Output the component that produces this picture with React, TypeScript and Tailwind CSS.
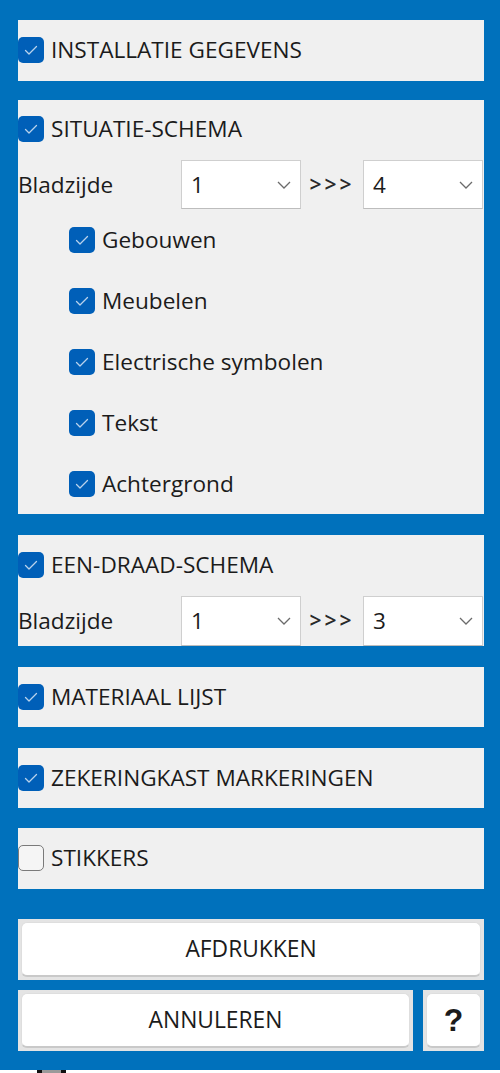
import React from "react";

const font = { fontFamily: '"Open Sans", "Noto Sans", "Liberation Sans", sans-serif' };

const Check = ({ checked = true }: { checked?: boolean }) =>
  checked ? (
    <div className="w-[26px] h-[26px] shrink-0 rounded-[5px] bg-[#005fb8] flex items-center justify-center">
      <svg width="26" height="26" viewBox="0 0 26 26">
        <polyline points="7.5,13.5 11,17 18.5,9.5" fill="none" stroke="#b9d2ec" strokeWidth="1.3" strokeLinecap="round" strokeLinejoin="round" />
      </svg>
    </div>
  ) : (
    <div className="w-[26px] h-[26px] shrink-0 rounded-[5px] border-[1.5px] border-[#7a7a7a] bg-[#f5f5f5]" />
  );

const Chevron = () => (
  <svg width="16" height="10" viewBox="0 0 16 10">
    <polyline points="2,2 8,8 14,2" fill="none" stroke="#6b6b6b" strokeWidth="1.3" />
  </svg>
);

const Select = ({ value }: { value: string }) => (
  <div className="w-[120px] h-full bg-white border border-[#cfcfcf] border-b-[#bdbdbd] flex items-center justify-between pl-[9px] pr-[8px]">
    <span className="text-[22.5px] text-[#1b1b1b]">{value}</span>
    <Chevron />
  </div>
);

const PageRow = ({ to, h }: { to: string; h: string }) => (
  <div className={`flex items-stretch ${h}`}>
    <div className="w-[163px] flex items-center text-[22.6px] text-[#1b1b1b]">Bladzijde</div>
    <Select value="1" />
    <div className="w-[62px] flex items-center justify-center text-[21px] font-semibold tracking-[3px] text-[#2a2a2a]">&gt;&gt;&gt;</div>
    <Select value={to} />
  </div>
);

const Header = ({ label, checked = true }: { label: string; checked?: boolean }) => (
  <div className="h-[60px] flex items-center gap-[7px]">
    <Check checked={checked} />
    <span className="text-[22.6px] text-[#1b1b1b]">{label}</span>
  </div>
);

const SubItem = ({ label }: { label: string }) => (
  <div className="h-[61px] shrink-0 flex items-center gap-[7px] pl-[51px]">
    <Check />
    <span className="text-[22.6px] text-[#1b1b1b]">{label}</span>
  </div>
);

const Button = ({ children, className = "" }: { children: React.ReactNode; className?: string }) => (
  <div className={`h-[61px] bg-[#e4e4e4] p-[3px] ${className}`}>
    <div className="h-full rounded-[6px] bg-white border border-[#dedede] border-b-[#c9c9c9] border-b-2 flex items-center justify-center text-[22.8px] text-[#1b1b1b]">
      {children}
    </div>
  </div>
);

export default function App() {
  return (
    <div style={font} className="w-[500px] h-[1073px] bg-white">
      <div className="h-[1070px] bg-[#0071bc] pl-[18px] pr-[16px] pt-[20px] flex flex-col">
        <div className="h-[61px] bg-[#f0f0f0]">
          <Header label="INSTALLATIE GEGEVENS" />
        </div>

        <div className="mt-[19px] h-[414px] bg-[#f0f0f0] flex flex-col overflow-hidden">
          <Header label="SITUATIE-SCHEMA" />
          <div className="mt-[2px]">
            <PageRow to="4" h="h-[49px]" />
          </div>
          <SubItem label="Gebouwen" />
          <SubItem label="Meubelen" />
          <SubItem label="Electrische symbolen" />
          <SubItem label="Tekst" />
          <SubItem label="Achtergrond" />
        </div>

        <div className="mt-[21px] h-[111px] bg-[#f0f0f0] flex flex-col">
          <Header label="EEN-DRAAD-SCHEMA" />
          <div className="mt-[1px]">
            <PageRow to="3" h="h-[50px]" />
          </div>
        </div>

        <div className="mt-[21px] h-[60px] bg-[#f0f0f0]">
          <Header label="MATERIAAL LIJST" />
        </div>

        <div className="mt-[21px] h-[60px] bg-[#f0f0f0]">
          <Header label="ZEKERINGKAST MARKERINGEN" />
        </div>

        <div className="mt-[20px] h-[61px] bg-[#f0f0f0]">
          <Header label="STIKKERS" checked={false} />
        </div>

        <Button className="mt-[30px]">AFDRUKKEN</Button>

        <div className="mt-[10px] flex gap-[10px]">
          <Button className="flex-1">ANNULEREN</Button>
          <Button className="w-[61px]">
            <span className="text-[32px] font-bold leading-none" style={{ fontFamily: '"Liberation Sans", Arial, sans-serif' }}>?</span>
          </Button>
        </div>
      </div>
      <div className="h-[3px] ml-[37px] w-[29px] border-x-[5px] border-[#111] bg-[#9a9a9a]" />
    </div>
  );
}
